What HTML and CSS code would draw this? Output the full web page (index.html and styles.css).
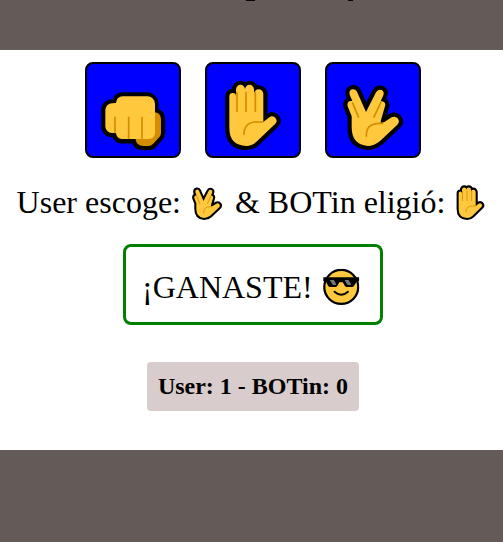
FILE: index.html
```html
<!DOCTYPE html>
<html lang="es">
<head>
<meta charset="utf-8">
<title>BOTin</title>
<link rel="stylesheet" href="styles.css">
</head>
<body>
<svg class="defs" aria-hidden="true">
  <symbol id="fist" viewBox="21 24 276 276">
    <path class="outline" d="M108 141A20 20 0 0 1 128 121H200A23 23 0 0 1 223 144V168Q243 172 243 190V230Q243 237 239 242L219 264Q213 270 205 270H190Q169 270 166 250H126A18 18 0 0 1 108 231H96A20 20 0 0 1 76 211V162A20 20 0 0 1 96 142Z"/>
    <path class="shade" d="M218 168Q243 168 243 190V230Q243 237 239 242L219 264Q213 270 205 270H190Q169 270 166 246Z"/>
    <path class="skin" d="M108 141A20 20 0 0 1 128 121H202A23 23 0 0 1 225 144V231A18 18 0 0 1 207 249H126A18 18 0 0 1 108 231H96A20 20 0 0 1 76 211V162A20 20 0 0 1 96 142Z"/>
    <path class="crease" d="M105 182V232M146 182V248M186 182V248"/>
  </symbol>
  <symbol id="hand" viewBox="21 24 276 276">
    <path class="outline" d="M88 121A10 10 0 0 1 108 121V100A13 13 0 0 1 135 100A13 13 0 0 1 162 100V114A14 14 0 0 1 190 114V198L208 184Q216 178 224 184Q235 193 226 203L171 256Q156 270 139 270Q88 268 88 216Z"/>
    <path class="skin" d="M88 121A10 10 0 0 1 108 121V100A13 13 0 0 1 135 100A13 13 0 0 1 162 100V114A14 14 0 0 1 190 114V198L208 184Q216 178 224 184Q235 193 226 203L171 256Q156 270 139 270Q88 268 88 216Z"/>
    <path class="crease" d="M111 107V168M138 107V168M166 107V168M132 236Q132 198 170 198H190"/>
  </symbol>
  <symbol id="vulcan" viewBox="21 24 276 276">
    <path class="outline" d="M97 135L89 116Q86 104 96 100Q106 98 111 107L138 168L168 109Q174 98 185 102Q194 107 190 118L182 136Q195 134 196 147L183 197L193 198L215 184Q225 179 233 187Q241 197 232 206L181 254Q162 270 143 270Q95 266 95 214V181L83 151Q80 139 90 135Z"/>
    <path class="skin" d="M97 135L89 116Q86 104 96 100Q106 98 111 107L138 168L168 109Q174 98 185 102Q194 107 190 118L182 136Q195 134 196 147L183 192L182 202L193 198L215 184Q225 179 233 187Q241 197 232 206L181 254Q162 270 143 270Q95 266 95 214V181L83 151Q80 139 90 135Z"/>
    <path class="crease" d="M97 139L116 185M183 138L161 185M139 242Q137 202 179 202H190"/>
  </symbol>
  <symbol id="cool" viewBox="0 0 114 114">
    <circle class="face" cx="57" cy="57" r="53"/>
    <path class="glasses" d="M1 27H113V39L105 41L97 53Q95 57 91 57H74Q69 57 67 52L62 42H51L46 52Q44 57 39 57H22Q18 57 16 53L9 41L1 39Z"/>
    <path class="shine" d="M21 35H34L42 49L38 51H31ZM67 35H80L88 49L84 51H77Z"/>
    <path class="smile" d="M36 72Q57 91 78 72"/>
  </symbol>
</svg>

<header class="bar"><span class="mark wide"></span><span class="mark"></span></header>
<main class="game">
  <div class="choices">
    <button class="choice" aria-label="Piedra"><svg><use href="#fist"/></svg></button>
    <button class="choice" aria-label="Papel"><svg><use href="#hand"/></svg></button>
    <button class="choice" aria-label="Spock"><svg><use href="#vulcan"/></svg></button>
  </div>
  <p class="picks">User escoge: <svg class="emoji" viewBox="0 0 38 38"><use href="#vulcan" x="-5" y="-6" width="46" height="46"/></svg> &amp; BOTin eligió: <svg class="emoji" viewBox="0 0 38 38"><use href="#hand" x="-5.5" y="-6" width="46" height="46"/></svg></p>
  <p class="result">¡GANASTE! <svg class="emoji" viewBox="0 0 38 38"><use href="#cool" x="2" y="0.7" width="36.5" height="36.5"/></svg></p>
  <p class="score">User: 1 - BOTin: 0</p>
</main>
</body>
</html>
```
FILE: styles.css
```css
* {
  box-sizing: border-box;
}

body {
  margin: 0;
  height: 542px;
  overflow: hidden;
  background: #645b59;
  color: #000;
  font-family: "Liberation Serif", serif;
}

.defs {
  display: none;
}

.bar {
  display: flex;
  gap: 93px;
  height: 50px;
  padding-left: 246px;
}

.mark {
  width: 5px;
  height: 1px;
  background: #000;
}

.mark.wide {
  width: 9px;
}

.game {
  display: flex;
  flex-direction: column;
  align-items: center;
  height: 400px;
  padding: 12px 0 0 3px;
  background: #fff;
}

.choices {
  display: flex;
  gap: 24px;
}

.choice {
  width: 96px;
  height: 96px;
  padding: 0;
  border: 2px solid #000;
  border-radius: 8px;
  background: #00f;
}

.choice svg {
  display: block;
  width: 92px;
  height: 92px;
}

p {
  margin: 0;
  white-space: nowrap;
}

.picks {
  height: 40px;
  margin-top: 25px;
  padding-left: 2px;
  font-size: 32px;
  line-height: 38px;
}

.emoji {
  display: inline-block;
  width: 38px;
  height: 38px;
  margin: -10px 0;
  overflow: visible;
  vertical-align: 2px;
}

.result {
  width: 260px;
  height: 81px;
  margin-top: 21px;
  padding-left: 16px;
  border: 3px solid #008000;
  border-radius: 8px;
  font-size: 32px;
  line-height: 80px;
}

.score {
  width: 212px;
  height: 49px;
  margin-top: 37px;
  border-radius: 4px;
  background: #d8cccc;
  font-size: 24px;
  font-weight: bold;
  line-height: 49px;
  text-align: center;
}

.outline {
  fill: #000;
  stroke: #000;
  stroke-width: 25px;
  stroke-linejoin: round;
}

.skin {
  fill: #ffc83d;
}

.shade {
  fill: #d48c00;
}

.crease {
  fill: none;
  stroke: #d48c00;
  stroke-width: 5px;
}

.face {
  fill: #ffc83d;
  stroke: #000;
  stroke-width: 7px;
}

.glasses {
  fill: #000;
}

.shine {
  fill: #777;
}

.smile {
  fill: none;
  stroke: #000;
  stroke-width: 6px;
  stroke-linecap: round;
}
```
